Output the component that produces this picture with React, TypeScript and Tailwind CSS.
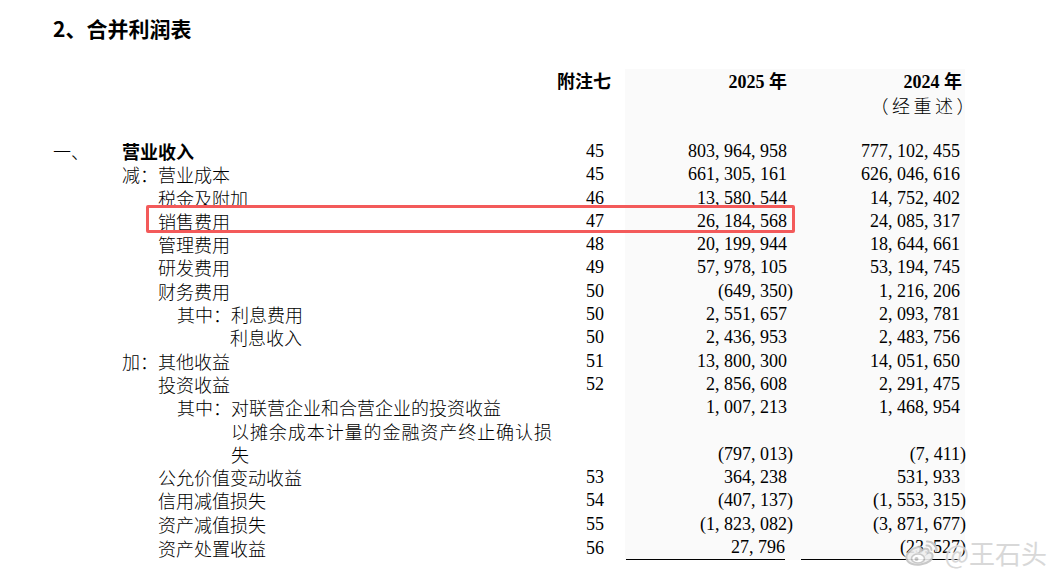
import React from 'react';

type Row = {
  lead?: string;
  label: string;
  indent: number;
  note?: string;
  a: string;
  b: string;
  bold?: boolean;
  wrap?: boolean;
  highlight?: boolean;
  last?: boolean;
};

const rows: Row[] = [
  { lead: '一、', label: '营业收入', indent: 0, note: '45', a: '803, 964, 958', b: '777, 102, 455', bold: true },
  { label: '减：营业成本', indent: 0, note: '45', a: '661, 305, 161', b: '626, 046, 616' },
  { label: '税金及附加', indent: 36, note: '46', a: '13, 580, 544', b: '14, 752, 402' },
  { label: '销售费用', indent: 36, note: '47', a: '26, 184, 568', b: '24, 085, 317', highlight: true },
  { label: '管理费用', indent: 36, note: '48', a: '20, 199, 944', b: '18, 644, 661' },
  { label: '研发费用', indent: 36, note: '49', a: '57, 978, 105', b: '53, 194, 745' },
  { label: '财务费用', indent: 36, note: '50', a: '(649, 350)', b: '1, 216, 206' },
  { label: '其中：利息费用', indent: 55, note: '50', a: '2, 551, 657', b: '2, 093, 781' },
  { label: '利息收入', indent: 108, note: '50', a: '2, 436, 953', b: '2, 483, 756' },
  { label: '加：其他收益', indent: 0, note: '51', a: '13, 800, 300', b: '14, 051, 650' },
  { label: '投资收益', indent: 36, note: '52', a: '2, 856, 608', b: '2, 291, 475' },
  { label: '其中：对联营企业和合营企业的投资收益', indent: 55, a: '1, 007, 213', b: '1, 468, 954' },
  { label: '以摊余成本计量的金融资产终止确认损失', indent: 109, a: '(797, 013)', b: '(7, 411)', wrap: true },
  { label: '公允价值变动收益', indent: 36, note: '53', a: '364, 238', b: '531, 933' },
  { label: '信用减值损失', indent: 36, note: '54', a: '(407, 137)', b: '(1, 553, 315)' },
  { label: '资产减值损失', indent: 36, note: '55', a: '(1, 823, 082)', b: '(3, 871, 677)' },
  { label: '资产处置收益', indent: 36, note: '56', a: '27, 796', b: '(23, 527)', last: true },
];

function Amount({ value }: { value: string }) {
  // 负数的右括号悬出对齐线
  if (value.startsWith('(')) {
    return <span className="inline-block -mr-[6px]">{value}</span>;
  }
  return <span>{value}</span>;
}

function WeiboLogo() {
  return (
    <svg width="36" height="30" viewBox="0 0 36 30" fill="none">
      <path
        d="M14 9C6 11 1.5 16.5 2.5 20.5C3.5 25.5 10.5 27.5 16.5 26.5C24.5 25.5 29.5 21 28.5 17C28 14.8 25.5 14.3 24.3 14.8C25.3 12.3 24 10.3 21 10.8C19 11.2 17.3 12.2 16.3 12.8C17.3 10.3 16.5 8.3 14 9Z"
        fill="#efefef"
        stroke="#c4c4c4"
        strokeWidth="2"
      />
      <ellipse cx="14" cy="20.5" rx="6.5" ry="4.5" fill="#fff" stroke="#c4c4c4" strokeWidth="1.6" />
      <circle cx="12.5" cy="21" r="2" fill="#c4c4c4" />
      <path d="M23 3.5A9 9 0 0 1 32.5 13" stroke="#c4c4c4" strokeWidth="2.2" strokeLinecap="round" />
      <path d="M22.5 7.5A4.5 4.5 0 0 1 27.5 12" stroke="#c4c4c4" strokeWidth="2" strokeLinecap="round" />
    </svg>
  );
}

export default function App() {
  return (
    <div className="relative w-[1059px] h-[578px] overflow-hidden bg-white text-black font-['Liberation_Serif','Noto_Sans_CJK_SC',serif]">
      <h1 className="pt-[14px] pl-[53px] text-[21px] leading-[28px] font-bold font-['Noto_Sans_CJK_SC',sans-serif]">
        2、合并利润表
      </h1>

      <div className="pl-[53px] mt-[27px] text-[18px]">
        <div className="grid grid-cols-[69px_435px_54px_14px_175px_165px] leading-[23px]">
          <div />
          <div />
          <div className="pt-[2px] font-bold">附注七</div>
          <div />
          <div className="bg-[#fafafa] pt-[2px] pr-[13px] text-right font-bold">2025 年</div>
          <div className="bg-[#fafafa] pt-[2px] pr-[3px] text-right font-bold">2024 年</div>
          <div />
          <div />
          <div />
          <div />
          <div className="bg-[#fafafa]" />
          <div className="bg-[#fafafa] text-right font-['Noto_Sans_CJK_SC',sans-serif] font-light">
            <span className="inline-block -mr-[13px] tracking-[3.5px]">（经重述）</span>
          </div>
          <div className="col-span-4 h-[23px]" />
          <div className="bg-[#fafafa] h-[23px]" />
          <div className="bg-[#fafafa] h-[23px]" />
        </div>

        {rows.map((r, i) => (
          <div key={i} className="relative grid grid-cols-[69px_435px_54px_14px_175px_165px] items-end leading-[23.3px]">
            <div className="font-['Noto_Sans_CJK_SC',sans-serif] font-light">{r.lead}</div>
            <div
              className={`font-['Noto_Sans_CJK_SC',sans-serif] ${r.bold ? 'font-bold' : 'font-light'}`}
              style={{ paddingLeft: r.indent }}
            >
              {r.wrap ? <div className="w-[321px] text-justify">{r.label}</div> : r.label}
            </div>
            <div className="pl-[29px]">{r.note}</div>
            <div />
            <div className="bg-[#fafafa] pr-[13px] text-right h-full flex flex-col justify-end">
              <div className={r.last ? 'ml-[1px] mr-[2px] border-b border-black' : ''}>
                <Amount value={r.a} />
              </div>
            </div>
            <div className="bg-[#fafafa] pr-[5px] text-right h-full flex flex-col justify-end">
              <div className={r.last ? 'ml-[1px] border-b border-black' : ''}>
                <Amount value={r.b} />
              </div>
            </div>
            {r.highlight && (
              <div className="absolute left-[93px] top-[-5px] w-[649px] h-[28px] border-[3px] border-[#f35a5a] rounded-[2px]" />
            )}
          </div>
        ))}
      </div>

      <div className="absolute right-[12px] bottom-[10px] flex items-center gap-[4px] opacity-90">
        <WeiboLogo />
        <span className="text-[26px] leading-[30px] text-[#d4d4d4] font-['Noto_Sans_CJK_SC',sans-serif] [text-shadow:0_0_2px_#fff,0_0_1px_#fff]">
          @王石头
        </span>
      </div>
    </div>
  );
}
